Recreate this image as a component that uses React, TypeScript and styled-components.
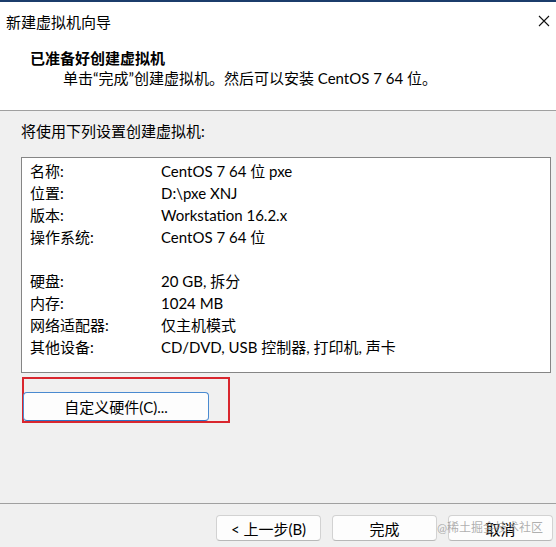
import React from 'react';
import styled, { createGlobalStyle } from 'styled-components';

const GlobalStyle = createGlobalStyle`
  html, body {
    margin: 0;
    padding: 0;
    background: #f0f0f0;
  }
  body {
    font-family: Lato, "Noto Sans CJK SC", sans-serif;
    color: #000;
  }
`;

const Window = styled.div`
  width: 556px;
  height: 547px;
  display: flex;
  flex-direction: column;
  background: #f0f0f0;
  overflow: hidden;
`;

const TitleBar = styled.div`
  height: 38px;
  border-top: 2px solid #1b3c6b;
  background: #fff;
  display: flex;
  align-items: center;
  justify-content: space-between;
  padding: 0 5px 0 6px;
  font-size: 15px;
`;

const CloseBtn = styled.div`
  width: 14px;
  height: 14px;
  display: flex;
  align-items: center;
  justify-content: center;
`;

const Header = styled.div`
  height: 71px;
  box-sizing: border-box;
  background: #fff;
  border-bottom: 1px solid #a0a0a0;
  padding: 8px 0 0 30px;
  line-height: 20px;
`;

const HeaderTitle = styled.div`
  font-size: 15px;
  font-weight: 700;
`;

const HeaderSub = styled.div`
  font-size: 15px;
  padding-left: 33px;
`;

const Body = styled.div`
  flex: 1;
  padding: 10px 5px 0 21px;
  display: flex;
  flex-direction: column;
`;

const Intro = styled.div`
  font-size: 15px;
  line-height: 20px;
  margin-bottom: 16px;
`;

const SummaryBox = styled.div`
  height: 216px;
  box-sizing: border-box;
  background: #fff;
  border: 1px solid #858585;
  padding: 2px 8px 0 8px;
`;

const Row = styled.div`
  display: grid;
  grid-template-columns: 131px 1fr;
  height: 22px;
  line-height: 22px;
  font-size: 15px;
`;

const Highlight = styled.div`
  margin-top: 4px;
  margin-left: 1px;
  width: 208px;
  height: 46px;
  box-sizing: border-box;
  border: 2px solid #d9262e;
  padding-top: 13px;
`;

const Button = styled.button<{ $focused?: boolean }>`
  font-family: inherit;
  font-size: 15px;
  color: #000;
  background: #fdfdfd;
  border: 1px solid ${p => (p.$focused ? '#4a8ad0' : '#d2d2d2')};
  border-bottom-color: ${p => (p.$focused ? '#2f74c4' : '#b8b8b8')};
  border-radius: 4px;
  padding: 0;
  display: flex;
  align-items: center;
  justify-content: center;
`;

const CustomButton = styled(Button)`
  width: 186px;
  height: 29px;
  margin-left: -1px;
`;

const Footer = styled.div`
  height: 44px;
  box-sizing: border-box;
  border-top: 1px solid #a0a0a0;
  padding: 11px 3px 0 0;
  display: flex;
  justify-content: flex-end;
  gap: 11px;
  position: relative;
`;

const FooterButton = styled(Button)`
  width: 105px;
  height: 26px;
`;

const Watermark = styled.span`
  position: absolute;
  left: 437px;
  top: 14px;
  font-size: 12px;
  color: rgba(140, 140, 140, 0.7);
  pointer-events: none;
`;

const rows: [string, string][] = [
  ['名称:', 'CentOS 7 64 位 pxe'],
  ['位置:', 'D:\\pxe XNJ'],
  ['版本:', 'Workstation 16.2.x'],
  ['操作系统:', 'CentOS 7 64 位'],
  ['', ''],
  ['硬盘:', '20 GB, 拆分'],
  ['内存:', '1024 MB'],
  ['网络适配器:', '仅主机模式'],
  ['其他设备:', 'CD/DVD, USB 控制器, 打印机, 声卡'],
];

export default function App() {
  return (
    <>
      <GlobalStyle />
      <Window>
        <TitleBar>
          <span>新建虚拟机向导</span>
          <CloseBtn>
            <svg width="12" height="12" viewBox="0 0 12 12">
              <path d="M1 1 L11 11 M11 1 L1 11" stroke="#111" strokeWidth="1.1" fill="none" />
            </svg>
          </CloseBtn>
        </TitleBar>
        <Header>
          <HeaderTitle>已准备好创建虚拟机</HeaderTitle>
          <HeaderSub>单击“完成”创建虚拟机。然后可以安装 CentOS 7 64 位。</HeaderSub>
        </Header>
        <Body>
          <Intro>将使用下列设置创建虚拟机:</Intro>
          <SummaryBox>
            {rows.map(([k, v], i) => (
              <Row key={i}>
                <span>{k}</span>
                <span>{v}</span>
              </Row>
            ))}
          </SummaryBox>
          <Highlight>
            <CustomButton $focused>自定义硬件(C)...</CustomButton>
          </Highlight>
        </Body>
        <Footer>
          <FooterButton>&lt; 上一步(B)</FooterButton>
          <FooterButton>完成</FooterButton>
          <FooterButton>取消</FooterButton>
          <Watermark>@稀土掘金技术社区</Watermark>
        </Footer>
      </Window>
    </>
  );
}
